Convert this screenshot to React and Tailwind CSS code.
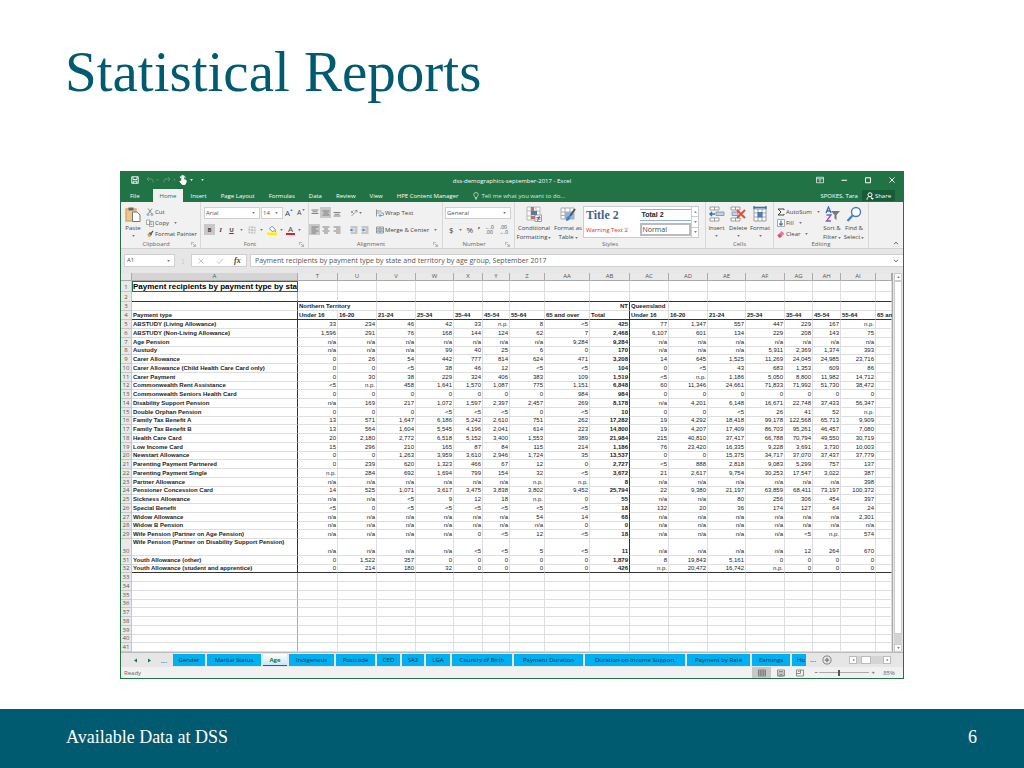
import React, { useState } from 'react';
import clsx from 'clsx';

const MENU_TABS = ['Insert', 'Page Layout', 'Formulas', 'Data', 'Review', 'View', 'HPE Content Manager'];

const COLUMNS = [
  { id: 'A', width: 'w-[166px]' },
  { id: 'T', width: 'w-[40px]' },
  { id: 'U', width: 'w-[39px]' },
  { id: 'V', width: 'w-[39px]' },
  { id: 'W', width: 'w-[38px]' },
  { id: 'X', width: 'w-[29px]' },
  { id: 'Y', width: 'w-[27px]' },
  { id: 'Z', width: 'w-[35px]' },
  { id: 'AA', width: 'w-[45px]' },
  { id: 'AB', width: 'w-[40px]' },
  { id: 'AC', width: 'w-[39px]' },
  { id: 'AD', width: 'w-[39px]' },
  { id: 'AE', width: 'w-[38px]' },
  { id: 'AF', width: 'w-[39px]' },
  { id: 'AG', width: 'w-[28px]' },
  { id: 'AH', width: 'w-[28px]' },
  { id: 'AI', width: 'w-[35px]' },
  { id: '', width: 'w-[16px]' },
];

const AGE_GROUPS = [
  'Under 16', '16-20', '21-24', '25-34', '35-44', '45-54', '55-64', '65 and over', 'Total',
  'Under 16', '16-20', '21-24', '25-34', '35-44', '45-54', '55-64', '65 and over',
];

// values run from column T to column AI
const PAYMENTS = [
  ['ABSTUDY (Living Allowance)', '33 234 46 42 33 n.p. 8 <5 425 77 1,347 557 447 229 167 n.p.'],
  ['ABSTUDY (Non-Living Allowance)', '1,596 291 76 168 144 124 62 7 2,468 6,107 601 134 229 208 143 75'],
  ['Age Pension', 'n/a n/a n/a n/a n/a n/a n/a 9,284 9,284 n/a n/a n/a n/a n/a n/a n/a'],
  ['Austudy', 'n/a n/a n/a 99 40 25 6 0 170 n/a n/a n/a 5,911 2,369 1,374 393'],
  ['Carer Allowance', '0 26 54 442 777 814 624 471 3,208 14 645 1,525 11,269 24,045 24,985 23,716'],
  ['Carer Allowance (Child Health Care Card only)', '0 0 <5 38 46 12 <5 <5 104 0 <5 43 683 1,353 609 86'],
  ['Carer Payment', '0 30 38 229 324 406 383 109 1,519 <5 n.p. 1,186 5,050 8,800 11,982 14,712'],
  ['Commonwealth Rent Assistance', '<5 n.p. 458 1,641 1,570 1,087 775 1,151 6,848 60 11,346 24,661 71,833 71,992 51,730 38,472'],
  ['Commonwealth Seniors Health Card', '0 0 0 0 0 0 0 984 984 0 0 0 0 0 0 0'],
  ['Disability Support Pension', 'n/a 169 217 1,072 1,597 2,397 2,457 269 8,178 n/a 4,201 6,148 16,671 22,748 37,433 56,347'],
  ['Double Orphan Pension', '0 0 0 <5 <5 <5 0 <5 10 0 0 <5 26 41 52 n.p.'],
  ['Family Tax Benefit A', '13 571 1,647 6,186 5,242 2,610 751 262 17,282 19 4,292 18,418 99,178 122,568 65,713 9,909'],
  ['Family Tax Benefit B', '13 564 1,604 5,545 4,196 2,041 614 223 14,800 19 4,207 17,409 86,703 95,261 46,457 7,080'],
  ['Health Care Card', '20 2,180 2,772 6,518 5,152 3,400 1,553 389 21,984 215 40,810 37,417 66,788 70,794 49,550 30,719'],
  ['Low Income Card', '15 296 210 165 87 84 115 214 1,186 76 23,420 16,335 9,228 3,691 3,730 10,003'],
  ['Newstart Allowance', '0 0 1,263 3,959 3,610 2,946 1,724 35 13,537 0 0 15,375 34,717 37,070 37,437 37,779'],
  ['Parenting Payment Partnered', '0 239 620 1,323 466 67 12 0 2,727 <5 888 2,818 9,083 5,299 757 137'],
  ['Parenting Payment Single', 'n.p. 284 692 1,694 799 154 32 <5 3,672 21 2,617 9,754 30,253 17,547 3,022 387'],
  ['Partner Allowance', 'n/a n/a n/a n/a n/a n/a n.p. n.p. 8 n/a n/a n/a n/a n/a n/a 398'],
  ['Pensioner Concession Card', '14 525 1,071 3,617 3,475 3,838 3,802 9,452 25,794 22 9,380 21,197 63,859 68,411 73,197 100,372'],
  ['Sickness Allowance', 'n/a n/a <5 9 12 18 n.p. 0 55 n/a n/a 80 256 306 454 397'],
  ['Special Benefit', '<5 0 <5 <5 <5 <5 <5 <5 18 132 20 36 174 127 64 24'],
  ['Widow Allowance', 'n/a n/a n/a n/a n/a n/a 54 14 68 n/a n/a n/a n/a n/a n/a 2,301'],
  ['Widow B Pension', 'n/a n/a n/a n/a n/a n/a n/a 0 0 n/a n/a n/a n/a n/a n/a n/a'],
  ['Wife Pension (Partner on Age Pension)', 'n/a n/a n/a n/a 0 <5 12 <5 18 n/a n/a n/a n/a <5 n.p. 574'],
  ['Wife Pension (Partner on Disability Support Pension)', 'n/a n/a n/a n/a <5 <5 5 <5 11 n/a n/a n/a n/a 12 264 670'],
  ['Youth Allowance (other)', '0 1,522 357 0 0 0 0 0 1,879 8 19,843 5,161 0 0 0 0'],
  ['Youth Allowance (student and apprentice)', '0 214 180 32 0 0 0 0 426 n.p. 20,472 16,742 n.p. 0 0 0'],
];

const SHEETS = [
  { name: 'Gender', width: 'w-[32px]' },
  { name: 'Marital Status', width: 'w-[54px]' },
  { name: 'Age', width: 'w-[24px]' },
  { name: 'Indigenous', width: 'w-[45px]' },
  { name: 'Postcode', width: 'w-[39px]' },
  { name: 'CED', width: 'w-[23px]' },
  { name: 'SA2', width: 'w-[22px]' },
  { name: 'LGA', width: 'w-[24px]' },
  { name: 'Country of Birth', width: 'w-[60px]' },
  { name: 'Payment Duration', width: 'w-[69px]' },
  { name: 'Duration on Income Support', width: 'w-[100px]' },
  { name: 'Payment by Rate', width: 'w-[63px]' },
  { name: 'Earnings', width: 'w-[38px]' },
];

const Caret = ({ className = 'text-[#777]', size = 'w-[3px] h-[2px]' }) => (
  <svg viewBox="0 0 4 3" className={clsx('shrink-0', size, className)} fill="currentColor" aria-hidden="true">
    <path d="M0 0h4L2 3z" />
  </svg>
);

const Icon = ({ className = 'w-2.5 h-2.5', children }) => (
  <svg viewBox="0 0 16 16" className={clsx('shrink-0', className)} fill="none" stroke="currentColor" strokeWidth="1.4" aria-hidden="true">
    {children}
  </svg>
);

const Group = ({ label, className, launcher, children }) => (
  <section className={clsx('flex shrink-0 flex-col border-r border-[#d8d8d8] pt-1', className)}>
    <div className="flex h-[34px]">{children}</div>
    <div className="flex h-2 items-center text-[#666]">
      <span className="flex-1 text-center">{label}</span>
      {launcher && (
        <button aria-label={`${label} settings`} className="mr-1">
          <Icon className="w-[5px] h-[5px]">
            <path d="M1 10V1h9M6 6l8 8M14 7v7H7" />
          </Icon>
        </button>
      )}
    </div>
  </section>
);

const BigButton = ({ lines, caret = 'inline', className, children }) => (
  <button className={clsx('flex flex-col items-center', className)}>
    {children}
    <span className="flex flex-col items-center pt-0.5 leading-[9px] whitespace-nowrap">
      {lines.map((line, i) => (
        <span key={line} className="flex items-center gap-px">
          {line}
          {caret === 'inline' && i === lines.length - 1 && <Caret />}
        </span>
      ))}
    </span>
    {caret === 'below' && <Caret className="mt-0.5 text-[#777]" />}
  </button>
);

const SmallButton = ({ label, caret, children }) => (
  <button className="flex h-[11px] items-center gap-px whitespace-nowrap">
    {children}
    <span>{label}</span>
    {caret && <Caret className="ml-1 text-[#777]" />}
  </button>
);

const ToolButton = ({ label, active, children }) => (
  <button
    aria-label={label}
    className={clsx('flex h-[11px] w-[11px] items-center justify-center', active && 'bg-[#c8c8c8]')}
  >
    {children}
  </button>
);

const Dropdown = ({ label, value, className }) => (
  <div className={clsx('relative flex h-3 items-center border border-[#d0d0d0] bg-white', className)}>
    <select aria-label={label} className="h-full w-full appearance-none bg-transparent p-0 pl-px leading-[10px] text-[#555]">
      <option>{value}</option>
    </select>
    <Caret className="absolute right-1 text-[#777]" />
  </div>
);

const Lines = ({ d }) => (
  <Icon className="w-2 h-2">
    <path d={d} strokeWidth="1.8" stroke="#777" />
  </Icon>
);

const TitleBar = () => (
  <div className="grid h-[18px] grid-cols-[1fr_auto_1fr] items-center text-white">
    <div className="flex items-center pl-2.5">
      <button aria-label="Save">
        <Icon className="w-2 h-2">
          <path d="M1.5 1.5h13v13h-13zM4 2v5h8V2M4.500 14.500v-4h7v4" strokeWidth="1.8" />
        </Icon>
      </button>
      <button aria-label="Undo" className="ml-[7px] flex items-center gap-0.5 text-[#5b9a75]">
        <Icon className="w-2 h-2">
          <path d="M6 2L2 6l4 4M2 6h8a4 4 0 0 1 3 7" strokeWidth="2" />
        </Icon>
        <Caret />
      </button>
      <button aria-label="Redo" className="ml-1 flex items-center gap-0.5 text-[#5b9a75]">
        <Icon className="w-2 h-2">
          <path d="M10 2l4 4-4 4M14 6H6a4 4 0 0 0-3 7" strokeWidth="2" />
        </Icon>
        <Caret />
      </button>
      <button aria-label="Touch mode" className="ml-0.5 flex items-center gap-0.5">
        <Icon className="w-2.5 h-2.5">
          <path d="M6 9V3a1.500 1.500 0 0 1 3 0v4l4 1.500V12l-2 3.500H7L3 10.500l1-1z" fill="currentColor" />
          <path d="M3.500 5a4 4 0 1 1 8 0" />
        </Icon>
        <Caret className="text-white" />
      </button>
      <button aria-label="Customize toolbar" className="ml-2">
        <Caret className="text-white" />
      </button>
    </div>
    <div className="pt-0.5">dss-demographics-september-2017 - Excel</div>
    <div className="flex items-center justify-end gap-4 pr-[7px]">
      <button aria-label="Ribbon display options">
        <Icon className="w-2 h-2">
          <path d="M1 2.500h14v11H1zM1 5.500h14M8 12V7.500M6 9l2-2 2 2" />
        </Icon>
      </button>
      <button aria-label="Minimize">
        <Icon className="w-2 h-2"><path d="M3 8.500h11" strokeWidth="2" /></Icon>
      </button>
      <button aria-label="Restore">
        <Icon className="w-2 h-2"><path d="M3 3.500h10v10H3z" strokeWidth="2" /></Icon>
      </button>
      <button aria-label="Close">
        <Icon className="w-2 h-2"><path d="M3 3l10 10M13 3L3 13" strokeWidth="2" /></Icon>
      </button>
    </div>
  </div>
);

const MenuBar = () => (
  <nav className="flex h-[13px] items-center pl-0.5 text-white">
    <button className="px-[7px]">File</button>
    <button className="ml-1.5 h-full bg-[#f1f1f1] px-[7px] text-[#217346]">Home</button>
    {MENU_TABS.map((tab) => (
      <button key={tab} className="px-[7px] whitespace-nowrap">{tab}</button>
    ))}
    <button className="flex items-center gap-px px-[7px] whitespace-nowrap text-[#d5e8dc]">
      <Icon className="w-2 h-2">
        <path d="M6 11C6 9 3.500 8 3.500 5.500a4.500 4.500 0 0 1 9 0C12.500 8 10 9 10 11zM6 13h4M7 15h2" />
      </Icon>
      Tell me what you want to do...
    </button>
    <span className="ml-auto pr-1 whitespace-nowrap">SPOKES, Tara</span>
    <button className="mr-2 flex h-[11px] items-center gap-px bg-[#185c37] px-1">
      <Icon className="w-2 h-2">
        <circle cx="8" cy="5.500" r="4" strokeWidth="2" />
        <path d="M2 15.500c0-4 2-6 5-6M9 10c3 0 4 2 4 5M10 13h5" strokeWidth="2" />
      </Icon>
      Share
    </button>
  </nav>
);

const ClipboardGroup = () => (
  <Group label="Clipboard" launcher className="w-[80px]">
    <BigButton lines={['Paste']} caret="below" className="ml-0.5 w-5">
      <Icon className="w-4 h-4">
        <path d="M1 3h10v12H1z" fill="#ecc68a" stroke="#d9ab63" />
        <path d="M3.500 1.500h5v3h-5z" fill="#666" stroke="none" />
        <path d="M7.500 6h4.500l3 3v6.500H7.500z" fill="#fff" stroke="#777" strokeWidth="1" />
      </Icon>
    </BigButton>
    <div className="flex flex-col pl-[3px]">
      <SmallButton label="Cut">
        <Icon className="w-2 h-2">
          <path d="M4 1l7 10M12 1L5 11" stroke="#666" />
          <circle cx="4" cy="13" r="2" stroke="#4f7fb5" />
          <circle cx="12" cy="13" r="2" stroke="#4f7fb5" />
        </Icon>
      </SmallButton>
      <SmallButton label="Copy" caret>
        <Icon className="w-2 h-2">
          <path d="M1 2h7v9H1zM7 5h8v10H7zM9 8h4M9 11h4" stroke="#888" fill="#fff" />
        </Icon>
      </SmallButton>
      <SmallButton label="Format Painter">
        <Icon className="w-2 h-2">
          <path d="M2 8l5-2 4 5-5 4z" fill="#e8a04c" stroke="none" />
          <path d="M7 5l4 5M10 7l4-5" stroke="#555" strokeWidth="2.500" />
        </Icon>
      </SmallButton>
    </div>
  </Group>
);

const FontGroup = () => (
  <Group label="Font" launcher className="w-[108px]">
    <div className="flex flex-1 flex-col gap-[5px] px-[3px] pt-px">
      <div className="flex items-center gap-px">
        <Dropdown label="Font" value="Arial" className="w-14" />
        <Dropdown label="Font size" value="14" className="w-[22px]" />
        <button aria-label="Increase font size" className="ml-px flex items-start text-[8px]">
          A<Caret className="rotate-180 text-[#4f7fb5]" />
        </button>
        <button aria-label="Decrease font size" className="ml-[3px] flex items-start text-[7px]">
          A<Caret className="text-[#4f7fb5]" />
        </button>
      </div>
      <div className="flex items-center">
        <button className="h-[11px] w-[11px] bg-[#c8c8c8] font-bold">B</button>
        <button className="w-[11px] font-['Liberation_Serif'] text-[7px] font-bold italic">I</button>
        <button className="w-[11px] font-bold underline">U</button>
        <Caret className="mx-[3px] text-[#777]" />
        <ToolButton label="Borders">
          <Icon className="w-2 h-2"><path d="M2 2h12v12H2zM8 2v12M2 8h12" stroke="#999" strokeDasharray="2 1" /></Icon>
        </ToolButton>
        <Caret className="mx-[3px] text-[#777]" />
        <ToolButton label="Fill colour">
          <Icon className="w-2.5 h-2.5">
            <path d="M4 6l4-4 5 5-4 4z" fill="#fff" stroke="#777" />
            <path d="M13 8c2 2 1 3 0 3s-1-1 0-3" fill="#4f7fb5" stroke="none" />
            <path d="M0 14h16" stroke="#ffef00" strokeWidth="4" />
          </Icon>
        </ToolButton>
        <Caret className="mx-[3px] text-[#777]" />
        <button aria-label="Font colour" className="h-[11px] w-[9px] border-b-2 border-[#e02020] text-[8px] leading-[9px]">A</button>
        <Caret className="ml-[3px] text-[#777]" />
      </div>
    </div>
  </Group>
);

const AlignmentGroup = () => (
  <Group label="Alignment" launcher className="w-[134px]">
    <div className="flex flex-col gap-1.5 pt-px">
      <div className="flex">
        <ToolButton label="Top align"><Lines d="M1 2h14M3 5.500h10M1 9h14" /></ToolButton>
        <ToolButton label="Middle align" active><Lines d="M1 4h14M3 8h10M1 12h14" /></ToolButton>
        <ToolButton label="Bottom align"><Lines d="M1 7h14M3 10.500h10M1 14h14" /></ToolButton>
        <span className="w-1.5" />
        <ToolButton label="Orientation">
          <Icon className="w-2 h-2"><path d="M3 14L14 3M10 3h4v4M2 8l5-5M2 4l5 5" stroke="#777" /></Icon>
        </ToolButton>
        <span className="flex items-center"><Caret /></span>
      </div>
      <div className="flex">
        <ToolButton label="Align left" active><Lines d="M1 2h14M1 6h9M1 10h14M1 14h9" /></ToolButton>
        <ToolButton label="Center"><Lines d="M1 2h14M4 6h8M1 10h14M4 14h8" /></ToolButton>
        <ToolButton label="Align right"><Lines d="M1 2h14M6 6h9M1 10h14M6 14h9" /></ToolButton>
        <span className="w-1.5" />
        <ToolButton label="Decrease indent">
          <Icon className="w-2 h-2">
            <path d="M1 2h14M9 6h6M9 10h6M1 14h14" stroke="#777" />
            <path d="M7 8H1M4 5L1 8l3 3" stroke="#2f75b5" strokeWidth="2" />
          </Icon>
        </ToolButton>
        <ToolButton label="Increase indent">
          <Icon className="w-2 h-2">
            <path d="M1 2h14M9 6h6M9 10h6M1 14h14" stroke="#777" />
            <path d="M1 8h6M4 5l3 3-3 3" stroke="#2f75b5" strokeWidth="2" />
          </Icon>
        </ToolButton>
      </div>
    </div>
    <div className="ml-1.5 flex flex-col gap-1.5 pt-px">
      <SmallButton label="Wrap Text">
        <Icon className="w-2 h-2">
          <path d="M1 1v14M1 4h10M1 8h6" stroke="#777" />
          <path d="M9 8h4a2 2 0 0 1 0 5H7M9 10l-3 3 3 3" stroke="#2f75b5" />
        </Icon>
      </SmallButton>
      <SmallButton label="Merge & Center" caret>
        <Icon className="w-2 h-2">
          <path d="M1 2h14v12H1zM1 5.500h14M1 10.500h14M8 2v3M8 11v3" stroke="#777" />
          <path d="M3 8h10" stroke="#2f75b5" />
        </Icon>
      </SmallButton>
    </div>
  </Group>
);

const NumberGroup = () => (
  <Group label="Number" launcher className="w-[72px]">
    <div className="flex flex-1 flex-col gap-[5px] px-0.5 pt-px">
      <Dropdown label="Number format" value="General" className="w-[66px]" />
      <div className="flex h-[11px] items-center justify-between px-1 text-[8px]">
        <button aria-label="Accounting format">$</button>
        <Caret />
        <button aria-label="Percent">%</button>
        <button aria-label="Comma" className="font-bold">’</button>
        <button aria-label="Increase decimal" className="text-[5px] leading-[5px]">
          <span className="text-[#2f75b5]">←</span>.0<br />.00
        </button>
        <button aria-label="Decrease decimal" className="text-[5px] leading-[5px]">
          .00<br /><span className="text-[#2f75b5]">→</span>.0
        </button>
      </div>
    </div>
  </Group>
);

const StylesGroup = () => (
  <Group label="Styles" className="w-[191px]">
    <BigButton lines={['Conditional', 'Formatting']} className="w-[38px]">
      <Icon className="w-4 h-4">
        <path d="M1 1h13v13H1zM5 1v13M10 1v13M1 5h13M1 10h13" fill="#fff" stroke="#aaa" strokeWidth="0.800" />
        <path d="M5 1h3v4H5zM5 10h4v3H5z" fill="#d9694a" stroke="none" />
        <path d="M5 5h6v4H5z" fill="#4a7ebb" stroke="none" />
        <path d="M9 9h6.500v6.500H9z" fill="#fff" stroke="#888" strokeWidth="0.800" />
        <path d="M10.500 11.500h4M10.500 13h4M13.500 10l-2 5" stroke="#555" strokeWidth="0.800" />
      </Icon>
    </BigButton>
    <BigButton lines={['Format as', 'Table']} className="w-[30px]">
      <Icon className="w-4 h-4">
        <path d="M1 2h13v11H1zM5 2v11M10 2v11M1 6h13M1 9.500h13" fill="#fff" stroke="#999" strokeWidth="0.800" />
        <path d="M5 6h9v7H5z" fill="#8db4e2" stroke="none" />
        <path d="M15 3l-5 7" stroke="#555" strokeWidth="2" />
        <path d="M6 15c0-3 1-5 4-5 1 2-1 5-4 5" fill="#4a7ebb" stroke="none" />
      </Icon>
    </BigButton>
    <div className="flex h-8 flex-1 pr-1.5">
      <div className="grid flex-1 grid-cols-2 grid-rows-2 items-center gap-x-0.5 border border-[#ccc] bg-white pl-0.5 whitespace-nowrap">
        <button className="text-left font-['Liberation_Serif'] text-[12px] leading-[14px] font-bold text-[#44618e]">Title 2</button>
        <button className="h-3 border-y border-[#8fb0dc] pl-0.5 text-left font-['Liberation_Sans'] text-[7px] font-bold text-[#222]">Total 2</button>
        <button className="text-left text-[6px] text-[#e8252b]">Warning Text 2</button>
        <button className="h-[13px] border-2 border-[#bbb] pl-px text-left text-[7px] leading-[9px]">Normal</button>
      </div>
      <div className="flex w-[7px] flex-col border border-l-0 border-[#ccc] bg-white">
        <button aria-label="Previous styles" className="flex flex-1 items-center justify-center"><Caret className="rotate-180 text-[#888]" /></button>
        <button aria-label="Next styles" className="flex flex-1 items-center justify-center border-y border-[#ccc]"><Caret /></button>
        <button aria-label="More styles" className="flex flex-1 items-center justify-center"><Caret /></button>
      </div>
    </div>
  </Group>
);

const CellsGroup = () => (
  <Group label="Cells" className="w-[68px]">
    <BigButton lines={['Insert']} caret="below" className="w-[21px]">
      <Icon className="w-4 h-4">
        <path d="M1 1h9v3H1zM1 12h9v3H1zM5.500 1v3M5.500 12v3" fill="#fff" stroke="#888" strokeWidth="0.800" />
        <path d="M7 6h8v3.500H7z" fill="#bdd3ee" stroke="#888" strokeWidth="0.800" />
        <path d="M6 8H1M3 6L1 8l2 2" stroke="#2f75b5" />
      </Icon>
    </BigButton>
    <BigButton lines={['Delete']} caret="below" className="w-[22px]">
      <Icon className="w-4 h-4">
        <path d="M1 1h9v3H1zM1 12h9v3H1zM5.500 1v3M5.500 12v3" fill="#fff" stroke="#888" strokeWidth="0.800" />
        <path d="M2 6h6v3.500H2z" fill="#bdd3ee" stroke="#888" strokeWidth="0.800" />
        <path d="M7 4l8 8M15 4l-8 8" stroke="#dd4b39" strokeWidth="1.800" />
      </Icon>
    </BigButton>
    <BigButton lines={['Format']} caret="below" className="w-[22px]">
      <Icon className="w-4 h-4">
        <path d="M2 3h12v12H2zM6 3v12M10 3v12M2 7h12M2 11h12" fill="#fff" stroke="#888" strokeWidth="0.800" />
        <path d="M5.500 6h5v5.500h-5z" fill="#4a7ebb" stroke="none" />
        <path d="M2 1.500h12M2 0v3M14 0v3" stroke="#2f75b5" />
      </Icon>
    </BigButton>
  </Group>
);

const EditingGroup = () => (
  <Group label="Editing" className="w-[95px]">
    <div className="flex w-[47px] flex-col pl-[3px]">
      <SmallButton label="AutoSum" caret>
        <Icon className="w-2 h-2"><path d="M14 4V2H2l6 6-6 6h12v-2" stroke="#444" strokeWidth="2" /></Icon>
      </SmallButton>
      <SmallButton label="Fill" caret>
        <Icon className="w-2 h-2">
          <path d="M1 1h14v14H1z" fill="#fff" stroke="#888" />
          <path d="M8 3v9M4.500 9L8 12.500 11.500 9" stroke="#2f75b5" strokeWidth="2.200" />
        </Icon>
      </SmallButton>
      <SmallButton label="Clear" caret>
        <Icon className="w-2 h-2">
          <path d="M1 11L9 2l6 5-8 8H4z" fill="#e57f98" stroke="none" />
          <path d="M1 11l3-3.500 6 4.500-3 3H4z" fill="#c95a78" stroke="none" />
        </Icon>
      </SmallButton>
    </div>
    <BigButton lines={['Sort &', 'Filter']} className="w-[22px]">
      <Icon className="w-4 h-4">
        <path d="M2 7l2.500-6L7 7M3 5h3" stroke="#2f75b5" strokeWidth="1.300" />
        <path d="M2.500 9H7l-4.500 6H7" stroke="#8e55b0" strokeWidth="1.300" />
        <path d="M7 5h9l-3.500 4v5l-2-1.500V9z" fill="#777" stroke="none" />
      </Icon>
    </BigButton>
    <BigButton lines={['Find &', 'Select']} className="w-[22px]">
      <Icon className="w-4 h-4">
        <circle cx="10" cy="6" r="4.500" fill="#fff" stroke="#4a7ebb" />
        <path d="M6.500 9.500L1.500 15" stroke="#4a7ebb" strokeWidth="2.200" />
      </Icon>
    </BigButton>
  </Group>
);

const Ribbon = () => (
  <div className="flex h-[47px] border-b border-[#d2d2d2] bg-[#f1f1f1]">
    <ClipboardGroup />
    <FontGroup />
    <AlignmentGroup />
    <NumberGroup />
    <StylesGroup />
    <CellsGroup />
    <EditingGroup />
    <button aria-label="Collapse ribbon" className="mt-auto mr-1 mb-0.5 ml-auto">
      <Icon className="w-1.5 h-1.5"><path d="M3 11l5-5 5 5" strokeWidth="2.500" /></Icon>
    </button>
  </div>
);

const FormulaBar = () => (
  <div className="flex h-6 items-start gap-[3px] bg-[#e6e6e6] pt-[5px] pl-[3px]">
    <div className="relative flex h-[13px] w-[51px] items-center border border-[#d0d0d0] bg-white">
      <input aria-label="Name box" defaultValue="A1" className="w-full bg-transparent pl-0.5 leading-[11px]" />
      <Caret className="absolute right-1 text-[#777]" />
    </div>
    <span className="flex h-[13px] w-[10px] items-center justify-center text-[#aaa]">⋮</span>
    <div className="flex h-[13px] w-14 items-center justify-around border border-[#d0d0d0] bg-white">
      <button aria-label="Cancel"><Icon className="w-2 h-2 text-[#aaa]"><path d="M3 3l10 10M13 3L3 13" /></Icon></button>
      <button aria-label="Enter"><Icon className="w-2 h-2 text-[#aaa]"><path d="M2 9l4 4 8-10" /></Icon></button>
      <button aria-label="Insert function" className="font-['Liberation_Serif'] text-[8px] leading-[11px] font-bold italic">fx</button>
    </div>
    <div className="flex h-[13px] flex-1 items-center border border-r-0 border-[#d0d0d0] bg-white pr-1">
      <input
        aria-label="Formula"
        className="w-full bg-transparent pl-1 text-[7px] leading-[11px] text-[#555]"
        defaultValue="Payment recipients by payment type by state and territory by age group, September 2017"
      />
      <Icon className="w-1.5 h-1.5"><path d="M3 5l5 5 5-5" strokeWidth="2.500" /></Icon>
    </div>
  </div>
);

const rowHeight = (n) => {
  if (n === 1) return 'h-[11px]';
  if (n === 2) return 'h-[10px]';
  if (n === 30) return 'h-[17px]';
  if (n > 4 && n % 4 === 0) return 'h-[8px]';
  return 'h-[9px]';
};

const Row = ({ n, children }) => (
  <tr className={rowHeight(n)}>
    <th scope="row" className="border-r border-b border-[#c6c6c6] bg-[#e9e9e9] p-0 text-center align-bottom font-['Open_Sans'] font-normal text-[#555]">
      {n}
    </th>
    {children}
  </tr>
);

// heavy rules frame the data block: after column A, after AB and below rows 2, 4 and 32
const Cell = ({ n, col, span, className, children }) => {
  const inData = n > 2 && n < 33;
  const ruled = inData && (col === 'A' || col === 'AB');
  return (
    <td
      colSpan={span}
      className={clsx(
        'border-r border-b px-px py-0 align-bottom whitespace-nowrap',
        ruled ? 'border-r-[#333]' : col === 'A' ? 'border-r-[#aaa]' : 'border-r-[#dedede]',
        n === 2 || n === 4 || n === 32 ? 'border-b-[#333]' : 'border-b-[#dedede]',
        className
      )}
    >
      {children}
    </td>
  );
};

const Sheet = () => (
  <div className="min-w-0 flex-1 overflow-hidden border-r border-[#aaa] bg-white">
    <table className="w-full table-fixed border-separate border-spacing-0 font-['Liberation_Sans'] text-[6px] leading-[7px] text-[#222]">
      <colgroup>
        <col className="w-[11px]" />
        {COLUMNS.map((c) => <col key={c.id} className={c.width} />)}
      </colgroup>
      <thead>
        <tr className="h-2 bg-[#e9e9e9] font-['Open_Sans'] text-[#555]">
          <td className="border-r border-b border-[#aaa] p-0" />
          {COLUMNS.map((c) => (
            <th
              key={c.id}
              scope="col"
              className={clsx(
                'border-r border-b border-[#aaa] p-0 text-center font-normal',
                c.id === 'A' && 'bg-[#d4d4d4] text-[#217346]'
              )}
            >
              {c.id}
            </th>
          ))}
        </tr>
      </thead>
      <tbody>
        <Row n={1}>
          <Cell n={1} col="A" className="overflow-hidden text-[8px] leading-[9px] font-bold text-black outline-1 -outline-offset-1 outline-[#217346]">
            Payment recipients by payment type by state and territory by age group, September 2017
          </Cell>
          {COLUMNS.slice(1).map((c) => <Cell key={c.id} n={1} col={c.id} />)}
        </Row>
        <Row n={2}>
          {COLUMNS.map((c) => <Cell key={c.id} n={2} col={c.id} />)}
        </Row>
        <Row n={3}>
          <Cell n={3} col="A" />
          <Cell n={3} col="T" span={2} className="font-bold">Northern Territory</Cell>
          {COLUMNS.slice(3, 9).map((c) => <Cell key={c.id} n={3} col={c.id} />)}
          <Cell n={3} col="AB" className="text-right font-bold">NT</Cell>
          <Cell n={3} col="AC" className="font-bold">Queensland</Cell>
          {COLUMNS.slice(11).map((c) => <Cell key={c.id} n={3} col={c.id} />)}
        </Row>
        <Row n={4}>
          <Cell n={4} col="A" className="font-bold">Payment type</Cell>
          {COLUMNS.slice(1).map((c, i) => (
            <Cell key={c.id} n={4} col={c.id} className="font-bold">{AGE_GROUPS[i]}</Cell>
          ))}
        </Row>
        {PAYMENTS.map(([name, values], i) => {
          const n = i + 5;
          return (
            <Row key={name} n={n}>
              <Cell n={n} col="A" className={clsx('font-bold', n === 30 && 'align-top')}>{name}</Cell>
              {values.split(' ').map((value, j) => (
                <Cell key={COLUMNS[j + 1].id} n={n} col={COLUMNS[j + 1].id} className={clsx('text-right', COLUMNS[j + 1].id === 'AB' && 'font-bold')}>
                  {value}
                </Cell>
              ))}
              <Cell n={n} col="" />
            </Row>
          );
        })}
        {[33, 34, 35, 36, 37, 38, 39, 40, 41].map((n) => (
          <Row key={n} n={n}>
            {COLUMNS.map((c) => <Cell key={c.id} n={n} col={c.id} />)}
          </Row>
        ))}
      </tbody>
    </table>
  </div>
);

const VerticalScroll = () => (
  <div className="flex w-2.5 flex-col bg-[#e6e6e6] px-px">
    <button aria-label="Scroll up" className="flex h-2 items-center justify-center border border-[#ccc] bg-white">
      <Caret className="rotate-180 text-[#777]" />
    </button>
    <div className="flex-1 border border-[#ccc] bg-white" />
    <div className="h-2.5 bg-[#d4d4d4]" />
    <button aria-label="Scroll down" className="flex h-2 items-center justify-center border border-[#ccc] bg-white">
      <Caret />
    </button>
  </div>
);

const SheetTabs = () => {
  const [active, setActive] = useState('Age');

  return (
    <div className="flex h-[15px] items-start border-t border-[#bbb] bg-[#e6e6e6] pt-px whitespace-nowrap">
      <div className="flex h-3 w-[52px] items-center justify-between pr-1.5 pl-3">
        <button aria-label="Previous sheet"><Caret size="w-[5px] h-[3px]" className="rotate-90 text-[#217346]" /></button>
        <button aria-label="Next sheet"><Caret size="w-[5px] h-[3px]" className="-rotate-90 text-[#217346]" /></button>
        <button aria-label="More sheets" className="text-[8px] leading-[8px]">...</button>
      </div>
      <div className="flex gap-0.5">
        {SHEETS.map((s) => (
          <button
            key={s.name}
            onClick={() => setActive(s.name)}
            className={clsx(
              'h-3 shrink-0 leading-[12px]',
              s.width,
              s.name === active
                ? 'border-b border-[#217346] bg-gradient-to-b from-white to-[#c5e8f5] font-bold text-[#217346]'
                : 'bg-[#00b0f0] text-[#12303f]'
            )}
          >
            {s.name}
          </button>
        ))}
        <button className="h-3 w-[14px] bg-[#00b0f0] pl-[5px] text-left leading-[12px] text-[#12303f]">
          Ho
        </button>
      </div>
      <span className="pl-1 text-[8px] leading-[10px]">...</span>
      <button aria-label="New sheet" className="ml-1.5 h-3">
        <Icon className="w-2.5 h-2.5 text-[#777]"><circle cx="8" cy="8" r="6.500" /><path d="M8 4.500v7M4.500 8h7" strokeWidth="2" /></Icon>
      </button>
      <div className="mt-0.5 mr-3 ml-auto flex h-2 w-[42px] bg-[#d4d4d4]">
        <button aria-label="Scroll left" className="flex w-2 items-center justify-center border border-[#bbb] bg-white">
          <Caret className="rotate-90 text-[#555]" />
        </button>
        <div className="ml-1 w-2.5 border border-[#bbb] bg-white" />
        <button aria-label="Scroll right" className="ml-auto flex w-2 items-center justify-center border border-[#bbb] bg-white">
          <Caret className="-rotate-90 text-[#555]" />
        </button>
      </div>
    </div>
  );
};

const StatusBar = () => (
  <div className="flex h-[11px] items-center bg-[#f1f1f1] pr-2 pl-[3px] text-[#666]">
    <span>Ready</span>
    <div className="ml-auto flex h-full items-center">
      <button aria-label="Normal view" className="flex h-full w-[19px] items-center justify-center bg-[#c8c8c8]">
        <Icon className="w-2 h-2"><path d="M1 2h14v12H1zM1 6h14M1 10h14M5.500 2v12M10.500 2v12" /></Icon>
      </button>
      <button aria-label="Page layout view" className="flex h-full w-[19px] items-center justify-center">
        <Icon className="w-2 h-2"><path d="M1 2h14v12H1zM4 5h8v9H4zM6 8h4M6 11h4" /></Icon>
      </button>
      <button aria-label="Page break view" className="flex h-full w-[19px] items-center justify-center">
        <Icon className="w-2 h-2"><path d="M1 2h14v12H1zM1 9h8V2M4 5h3" /></Icon>
      </button>
      <button aria-label="Zoom out" className="ml-1 w-1.5 leading-[8px] font-bold">−</button>
      <input
        type="range"
        aria-label="Zoom"
        min="10"
        max="200"
        defaultValue="85"
        className="h-1.5 w-[50px] appearance-none bg-[linear-gradient(#aaa,#aaa)] bg-[length:100%_1px] bg-center bg-no-repeat [&::-webkit-slider-thumb]:h-1.5 [&::-webkit-slider-thumb]:w-0.5 [&::-webkit-slider-thumb]:appearance-none [&::-webkit-slider-thumb]:bg-[#555]"
      />
      <button aria-label="Zoom in" className="w-2 leading-[8px] font-bold">+</button>
      <span className="ml-1.5">85%</span>
    </div>
  </div>
);

const ExcelWindow = () => (
  <div className="overflow-hidden border border-t-0 border-[#217346] bg-[#e6e6e6] font-['Open_Sans',sans-serif] text-[6px] leading-[8px] text-[#444]">
    <header className="bg-[#217346]">
      <TitleBar />
      <MenuBar />
    </header>
    <Ribbon />
    <FormulaBar />
    <div className="flex">
      <Sheet />
      <VerticalScroll />
    </div>
    <SheetTabs />
    <StatusBar />
  </div>
);

export default function App() {
  return (
    <div className="flex min-h-screen flex-col bg-white font-['Liberation_Serif',serif]">
      <h1 className="px-[65px] pt-10 text-[57px] leading-[64px] text-[#005a70]">Statistical Reports</h1>
      <main className="mx-[120px] mt-[67px]">
        <ExcelWindow />
      </main>
      <footer className="mt-auto flex h-[59px] items-center justify-between bg-[#005a70] pr-[47px] pb-0.5 pl-[66px] text-[18px] text-white">
        <span>Available Data at DSS</span>
        <span>6</span>
      </footer>
    </div>
  );
}
